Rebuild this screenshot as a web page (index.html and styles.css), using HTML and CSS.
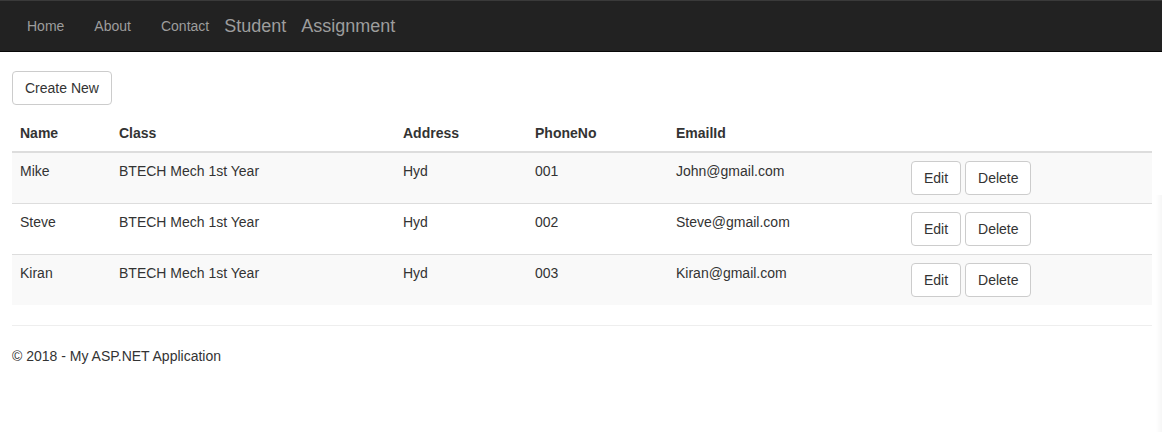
FILE: index.html
```html
<!DOCTYPE html>
<html>
<head>
<meta charset="utf-8">
<title>Student Assignment</title>
<link rel="stylesheet" href="styles.css">
</head>
<body>
<nav class="navbar">
  <ul class="nav">
    <li><a href="#">Home</a></li>
    <li><a href="#">About</a></li>
    <li><a href="#">Contact</a></li>
  </ul>
  <a class="brand" href="#"><span>Student</span><span>Assignment</span></a>
</nav>
<main class="container">
  <p class="actions"><a class="btn" href="#">Create New</a></p>
  <table class="table">
    <colgroup>
      <col class="c-name"><col class="c-class"><col class="c-addr"><col class="c-phone"><col class="c-email"><col>
    </colgroup>
    <thead>
      <tr><th>Name</th><th>Class</th><th>Address</th><th>PhoneNo</th><th>EmailId</th><th></th></tr>
    </thead>
    <tbody>
      <tr>
        <td>Mike</td><td>BTECH Mech 1st Year</td><td>Hyd</td><td>001</td><td>John@gmail.com</td>
        <td><a class="btn" href="#">Edit</a> <a class="btn" href="#">Delete</a></td>
      </tr>
      <tr>
        <td>Steve</td><td>BTECH Mech 1st Year</td><td>Hyd</td><td>002</td><td>Steve@gmail.com</td>
        <td><a class="btn" href="#">Edit</a> <a class="btn" href="#">Delete</a></td>
      </tr>
      <tr>
        <td>Kiran</td><td>BTECH Mech 1st Year</td><td>Hyd</td><td>003</td><td>Kiran@gmail.com</td>
        <td><a class="btn" href="#">Edit</a> <a class="btn" href="#">Delete</a></td>
      </tr>
    </tbody>
  </table>
  <hr class="rule">
  <footer class="footer">
    <p>&copy; 2018 - My ASP.NET Application</p>
  </footer>
</main>
<div class="edge-shadow"></div>
</body>
</html>
```
FILE: styles.css
```css
* { box-sizing: border-box; }
html, body { margin: 0; padding: 0; }
body {
  font-family: "Liberation Sans", Arial, sans-serif;
  font-size: 14px;
  line-height: 20px;
  color: #333;
  background: #fff;
}
a { text-decoration: none; }

.navbar {
  display: flex;
  align-items: flex-start;
  height: 52px;
  background: #222;
  border-top: 1px solid #3a3a3a;
  border-bottom: 1px solid #080808;
  padding: 0 12px;
}
.nav {
  display: flex;
  list-style: none;
  margin: 0;
  padding: 0;
}
.nav a {
  display: block;
  padding: 15px 15px;
  color: #9d9d9d;
  font-size: 14px;
  line-height: 20px;
}
.brand {
  display: flex;
  gap: 15px;
  padding: 15px 0;
  color: #9d9d9d;
  font-size: 18px;
  line-height: 20px;
}

.container {
  padding: 19px 12px 0 12px;
  width: 1164px;
}
.actions { margin: 0 0 10px; }
.btn {
  display: inline-block;
  padding: 6px 12px;
  font-size: 14px;
  line-height: 20px;
  color: #333;
  background: #fff;
  border: 1px solid #ccc;
  border-radius: 4px;
  vertical-align: middle;
}

.table {
  width: 1140px;
  border-collapse: collapse;
  border-spacing: 0;
  table-layout: fixed;
  margin-bottom: 20px;
}
.c-name { width: 99px; }
.c-class { width: 284px; }
.c-addr { width: 132px; }
.c-phone { width: 141px; }
.c-email { width: 235px; }
.table th, .table td {
  padding: 8px;
  text-align: left;
  vertical-align: top;
  line-height: 20px;
}
.table th {
  font-weight: bold;
  border-bottom: 2px solid #ddd;
  vertical-align: bottom;
}
.table tbody tr + tr td { border-top: 1px solid #ddd; }
.table tbody tr:nth-child(odd) { background: #f9f9f9; }

.rule {
  margin: 0 0 20px;
  border: 0;
  border-top: 1px solid #eee;
  width: 1140px;
}
.footer p { margin: 0 0 10px; }

.edge-shadow {
  position: absolute;
  top: 195px;
  right: 0;
  width: 6px;
  height: 237px;
  background: linear-gradient(to right, rgba(0,0,0,0), rgba(0,0,0,0.035));
}
```
